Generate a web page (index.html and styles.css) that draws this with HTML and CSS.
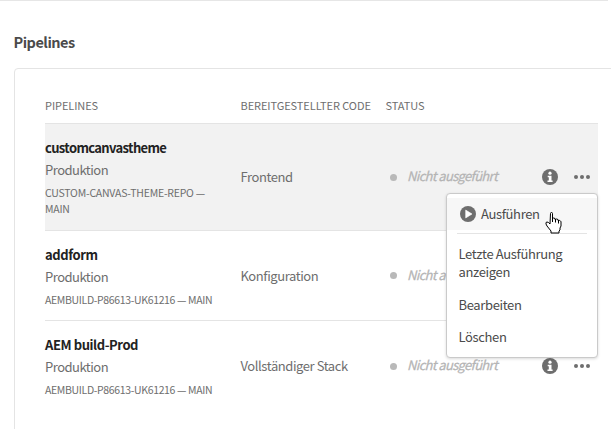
FILE: index.html
```html
<!DOCTYPE html>
<html lang="de">
<head>
<meta charset="utf-8">
<title>Pipelines</title>
<link rel="stylesheet" href="styles.css">
</head>
<body>
<svg class="defs" width="0" height="0">
  <symbol id="info" viewBox="0 0 16 16"><circle cx="8" cy="8" r="8" fill="#6e6e6e"/><circle cx="8" cy="4.2" r="1.6" fill="#fff"/><path d="M5.700 6.700h3.800v4.700h1.100V13H5.500v-1.600h1.300V8.300H5.700z" fill="#fff"/></symbol>
  <symbol id="more" viewBox="0 0 16 16"><g fill="#6e6e6e"><circle cx="2" cy="8" r="2"/><circle cx="8" cy="8" r="2"/><circle cx="14" cy="8" r="2"/></g></symbol>
</svg>
<main class="page">
  <h1 class="title">Pipelines</h1>
  <section class="card">
    <div class="row head"><span>PIPELINES</span><span>BEREITGESTELLTER CODE</span><span>STATUS</span></div>
    <div class="row item active">
      <div class="info"><div class="name">customcanvastheme</div><div class="env">Produktion</div><div class="repo wrapped">CUSTOM-CANVAS-THEME-REPO —<br>MAIN</div></div>
      <div class="code">Frontend</div>
      <div class="status"><i class="dot"></i><em>Nicht ausgeführt</em></div>
      <div class="actions"><svg><use href="#info"/></svg><svg><use href="#more"/></svg></div>
      <div class="menu">
        <div class="entry run"><svg class="play" viewBox="0 0 16 16"><circle cx="8" cy="8" r="8" fill="#6e6e6e"/><path d="M5.700 4.100v7.800L12 8z" fill="#fff" stroke="#fff" stroke-width=".6" stroke-linejoin="round"/></svg><span>Ausführen</span></div>
        <hr>
        <div class="entry last"><div>Letzte Ausführung</div><div>anzeigen</div></div>
        <div class="entry">Bearbeiten</div>
        <div class="entry">Löschen</div>
        <svg class="cursor" viewBox="0 0 17 22"><path d="M5.500 1.500q0-1 1-1t1 1v5q1-1 2.500 0v1q1.500-1 3 0v1q1.500-.5 2.500.5.500.5.500 1v4l-1 2v2l-1 1v2h-8v-2l-4-5-1-2q-.5-2 1-2 1.500 0 3 2z" fill="#fff" stroke="#000"/><path d="M7.500 6v4M10.500 7v3.500M13.500 8.500v3" stroke="#000" fill="none"/></svg>
      </div>
    </div>
    <div class="row item">
      <div class="info"><div class="name short">addform</div><div class="env">Produktion</div><div class="repo">AEMBUILD-P86613-UK61216 — MAIN</div></div>
      <div class="code">Konfiguration</div>
      <div class="status"><i class="dot"></i><em>Nicht ausgeführt</em></div>
      <div class="actions"><svg><use href="#info"/></svg><svg><use href="#more"/></svg></div>
    </div>
    <div class="row item">
      <div class="info"><div class="name short">AEM build-Prod</div><div class="env">Produktion</div><div class="repo">AEMBUILD-P86613-UK61216 — MAIN</div></div>
      <div class="code">Vollständiger Stack</div>
      <div class="status"><i class="dot"></i><em>Nicht ausgeführt</em></div>
      <div class="actions"><svg><use href="#info"/></svg><svg><use href="#more"/></svg></div>
    </div>
  </section>
</main>
</body>
</html>
```
FILE: styles.css
```css
* { box-sizing: border-box; }
body { margin: 0; height: 429px; overflow: hidden; background: #fff; font-family: "Noto Sans CJK JP", "Open Sans", sans-serif; font-size: 13px; line-height: 22px; letter-spacing: -.42px; color: #6e6e6e; }
.defs { display: block; height: 0; }
.page { display: flex; flex-direction: column; height: 429px; overflow: hidden; }
.page::before { content: ""; width: 608px; height: 1px; background: #e6e6e6; flex: none; }
.title { margin: 30px 0 15px 13.5px; font-size: 14.5px; line-height: 22px; letter-spacing: -.5px; font-weight: 700; color: #4b4b4b; flex: none; }
.card { margin-left: 14px; width: 620px; height: 400px; flex: none; border: 1px solid #e4e4e4; border-radius: 4px; padding: 21px 0 0 30px; }
.row { display: grid; grid-template-columns: 195.5px 145px 156.5px 56px; width: 553px; align-items: center; position: relative; white-space: nowrap; border-bottom: 1px solid #e4e4e4; }
.head { height: 34px; font-size: 11px; letter-spacing: -.08px; padding-bottom: 3px; }
.item { height: 90px; }
.item.active { height: 107px; background: #f2f2f2; }
.item:last-child { border: 0; }
.info { align-self: start; padding-top: 13px; }
.name { font-weight: 700; letter-spacing: -.65px; color: #222; }
.name.short { letter-spacing: -.42px; }
.env { letter-spacing: -.5px; }
.repo { margin-top: 4px; font-size: 10.5px; line-height: 16px; letter-spacing: -.35px; }
.repo.wrapped { letter-spacing: -.23px; }
.status { display: flex; align-items: center; color: #b4b4b4; }
.dot { width: 7px; height: 7px; border-radius: 50%; background: #b9b9b9; margin: 0 10.5px 0 4px; }
.status em { font-weight: 400; letter-spacing: -.67px; -webkit-text-stroke: .25px #b4b4b4; position: relative; top: -1px; }
.actions { display: flex; gap: 16px; }
.actions svg { width: 16px; height: 16px; }
.menu { position: absolute; z-index: 2; left: 401px; top: 69px; width: 152px; height: 165px; background: #fff; border: 1px solid #cacaca; border-radius: 4px; box-shadow: 0 1px 3px rgba(0,0,0,.15); padding-top: 4px; color: #4b4b4b; letter-spacing: -.36px; }
.entry { padding: 5px 12px 5px 11.5px; height: 32px; }
.run { display: flex; align-items: center; gap: 5px; background: #f7f7f7; }
.play { width: 16px; height: 16px; margin-left: 1.5px; }
.menu hr { border: 0; height: 1px; background: #e4e4e4; margin: 3px 10px 4px; }
.last { line-height: 18px; height: 51px; padding-top: 7px; }
.cursor { position: absolute; left: 98px; top: 18px; width: 17px; height: 22px; }
```
